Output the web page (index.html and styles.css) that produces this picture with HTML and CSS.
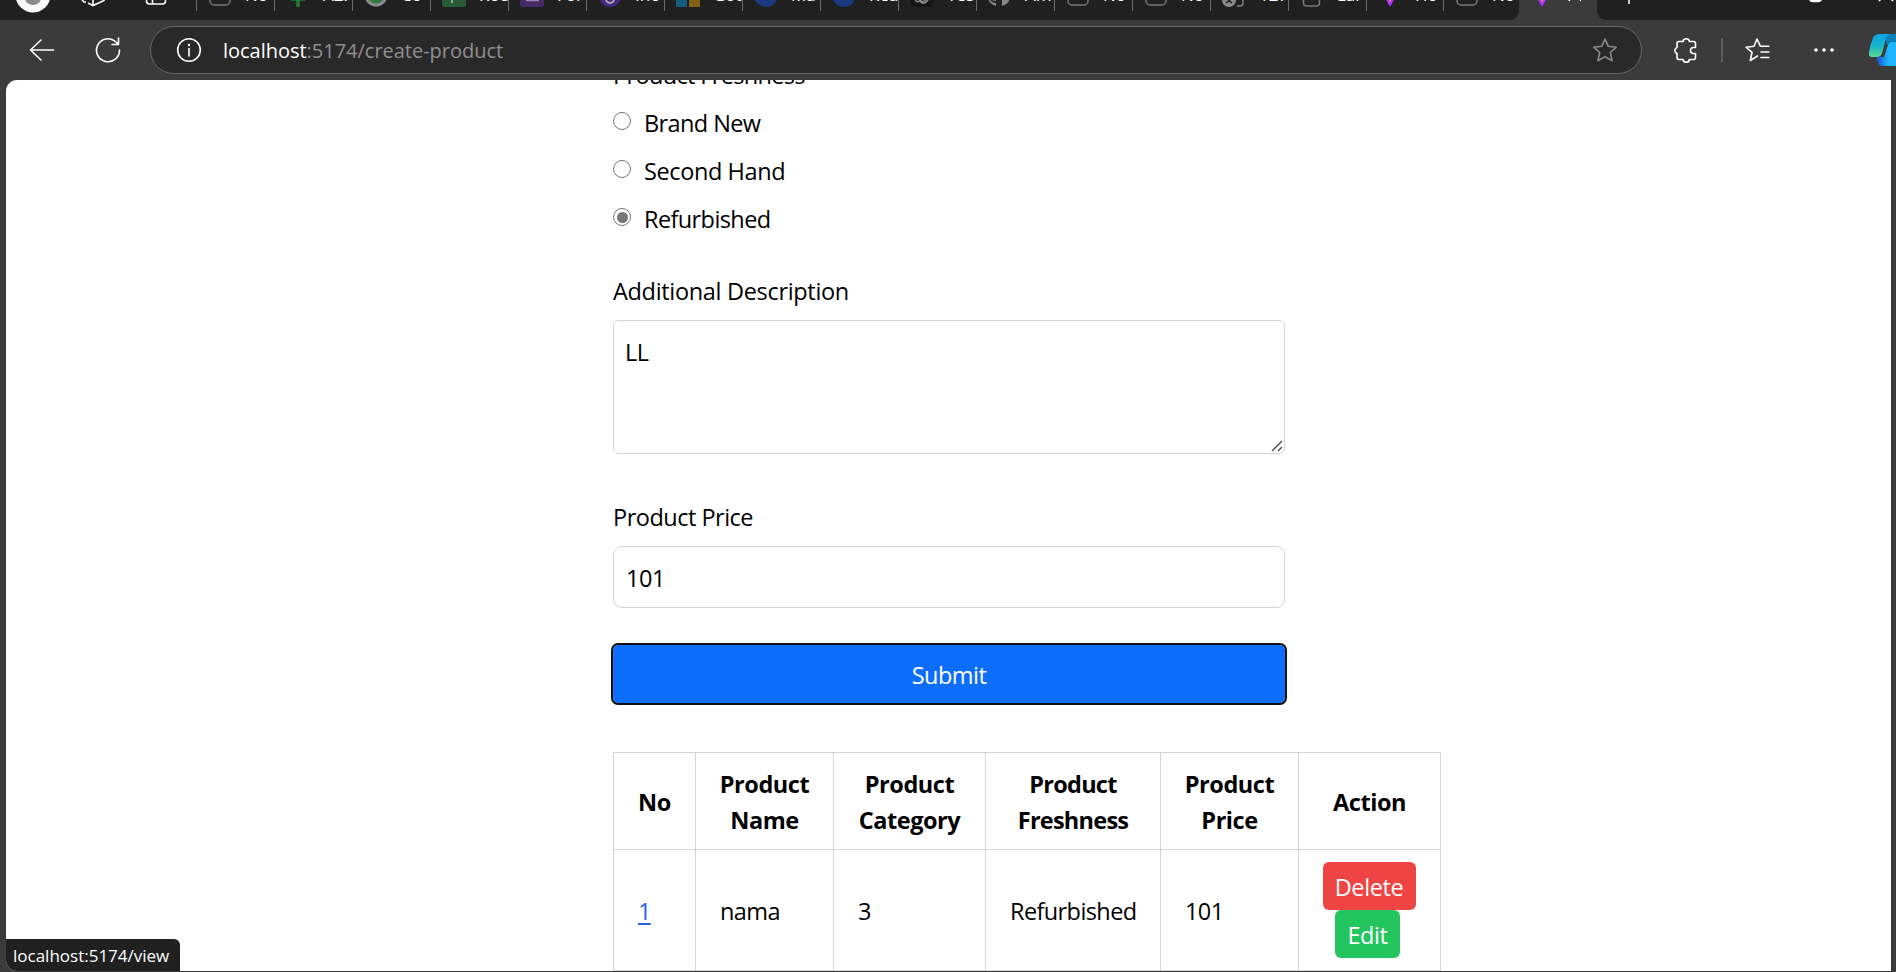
FILE: index.html
```html
<!DOCTYPE html>
<html lang="en">
<head>
<meta charset="utf-8">
<title>Create product</title>
<link rel="stylesheet" href="styles.css">
</head>
<body>
<div class="browser">
  <div class="tabstrip">
    <div class="pinned">
      <svg width="197" height="20" viewBox="0 0 197 20" fill="none">
        <circle cx="33" cy="-5" r="17.500" fill="#fafafa"/><ellipse cx="33" cy="-2" rx="8" ry="7" fill="#8a8a8a"/>
        <path d="M82 0l2 2 2 0M88 3l5 2.500 11-5V-3M93 5v-8" stroke="#fff" stroke-width="1.600"/>
        <path d="M146.500-4v5q0 3 3 3h13q3 0 3-3v-2.500h-13M152.500-2v6" stroke="#fff" stroke-width="1.600"/>
      </svg>
    </div>
    <div class="tab"><svg class="fav" viewBox="0 0 24 20"><rect class="doc" x="0" y="-12" width="20" height="17" rx="4"/></svg><span>No</span></div>
    <div class="tab"><svg class="fav" viewBox="0 0 24 20"><path d="M10-5v12M3-1h14" stroke="#247a34" stroke-width="3.500" fill="none"/></svg><span>AZ.</span></div>
    <div class="tab"><svg class="fav" viewBox="0 0 24 20"><circle cx="10" cy="-5" r="10" fill="#347a3c" stroke="#8a8a8a" stroke-width="3"/><path d="M14-3l3 1-4 4z" fill="#2b55b5"/></svg><span>Co</span></div>
    <div class="tab"><svg class="fav" viewBox="0 0 24 20"><rect x="-2" y="-16" width="24" height="23" rx="2" fill="#285c38"/><path d="M8-2v5" stroke="#8aa591" stroke-width="2"/></svg><span>Rou</span></div>
    <div class="tab"><svg class="fav" viewBox="0 0 24 20"><rect x="-2" y="-16" width="24" height="23" rx="2" fill="#452a65"/><path d="M4 .5h13" stroke="#9b84af" stroke-width="1.500"/></svg><span>For</span></div>
    <div class="tab"><svg class="fav" viewBox="0 0 24 20"><circle cx="10" cy="-4" r="11" fill="#482685"/><circle cx="10" cy="-1" r="4" fill="none" stroke="#aaa" stroke-width="2"/></svg><span>Ino</span></div>
    <div class="tab"><svg class="fav" viewBox="0 0 24 20"><path d="M-2-5h11V7H-2z" fill="#155d7e"/><path d="M11-5h11V7H11z" fill="#806115"/></svg><span>Got</span></div>
    <div class="tab"><svg class="fav" viewBox="0 0 24 20"><circle cx="10" cy="-5" r="12" fill="#193a7e"/></svg><span>Ma</span></div>
    <div class="tab"><svg class="fav" viewBox="0 0 24 20"><circle cx="10" cy="-5" r="12" fill="#193a7e"/></svg><span>Rea</span></div>
    <div class="tab"><svg class="fav" viewBox="0 0 24 20"><rect x="-2" y="-16" width="24" height="23" rx="6" fill="#151515"/><path d="M3-1q1 4 5 2 4 5 8-1M6-1l5 3 4-3" stroke="#888" stroke-width="1.500" fill="none"/></svg><span>Tes</span></div>
    <div class="tab"><svg class="fav" viewBox="0 0 24 20"><path d="M-2-2q1 6 8 8V3Q2 3 0 0l6 1V-2zM12-2v8q7-2 8-8z" fill="#858585"/></svg><span>Am</span></div>
    <div class="tab"><svg class="fav" viewBox="0 0 24 20"><rect class="doc" x="0" y="-12" width="20" height="17" rx="4"/></svg><span>No</span></div>
    <div class="tab"><svg class="fav" viewBox="0 0 24 20"><rect class="doc" x="0" y="-12" width="20" height="17" rx="4"/></svg><span>No</span></div>
    <div class="tab"><svg class="fav" viewBox="0 0 24 20"><circle cx="5" cy="0" r="7" fill="#8a8a8a"/><path d="M2-2l6 5M8-2L2 3" stroke="#202020" stroke-width="1.500"/><path d="M13 6h3q3 0 3-3v-6" fill="none" stroke="#858585" stroke-width="1.400"/></svg><span>127</span></div>
    <div class="tab"><svg class="fav" viewBox="0 0 24 20"><rect class="doc" x="1.500" y="-12" width="16" height="18" rx="3"/></svg><span>Lar</span></div>
    <div class="tab tab-vite"><svg class="fav" viewBox="0 0 24 20"><path d="M5-2h10L10 7z" fill="#a832ff"/><path d="M9-2h3l-2 5z" fill="#ffa024"/></svg><span>Ho</span></div>
    <div class="tab tab-last"><svg class="fav" viewBox="0 0 24 20"><rect class="doc" x="0" y="-12" width="20" height="17" rx="4"/></svg><span>No</span></div>
    <div class="tab tab-active"><svg class="fav" viewBox="0 0 24 20"><path d="M5-2h10L10 7z" fill="#a832ff"/><path d="M9-2h3l-2 5z" fill="#ffa024"/></svg><svg class="close" viewBox="0 0 14 20"><path d="M2 1l2-5M14 1l-2-5" fill="none" stroke="#fff" stroke-width="1.800"/></svg></div>
    <div class="window-controls">
      <svg width="300" height="20" viewBox="0 0 300 20" fill="none"><path d="M32-2v6" stroke="#fff" stroke-width="1.500"/><path d="M213-2q0 3 3 3h5q3 0 3-3" stroke="#fff" stroke-width="2.500"/><path d="M282 1l7-7 7 7" stroke="#fff" stroke-width="1.600"/></svg>
    </div>
  </div>

  <div class="toolbar">
    <svg class="back" width="26" height="26" viewBox="0 0 26 26"><path d="M12 3L1.500 13l10.500 10M1.500 13h23"/></svg>
    <svg class="reload" width="26" height="26" viewBox="0 0 26 26"><path d="M24.500 13A11.500 11.500 0 1 1 20.500 4.500L23.500 7.500M23.500 1v6.500H17"/></svg>
    <div class="address">
      <svg class="info" width="26" height="26" viewBox="0 0 26 26"><circle cx="13" cy="13" r="11.300"/><path d="M13 11.500v7.500"/><circle class="dot" cx="13" cy="8" r="1.200"/></svg>
      <div class="url"><b>localhost</b>:5174/create-product</div>
      <svg class="fav-star" width="26" height="26" viewBox="0 0 26 26"><path d="M13 2l3.300 7.300 8 .9-6 5.300 1.800 8.200-7.100-4.100-7.100 4.100 1.800-8.200-6-5.300 8-.9z"/></svg>
    </div>
    <svg class="puzzle" width="26" height="26" viewBox="0 0 26 26"><path d="M6 4.500h4a3.300 3.300 0 0 1 6.500 0h4q2 0 2 2v4h-2a3 3 0 0 0 0 6h2v4q0 2-2 2h-4a3.300 3.300 0 0 1-6.500 0H6q-2 0-2-2v-4a3.200 3.200 0 0 1 0-6v-4q0-2 2-2z"/></svg>
    <div class="divider"></div>
    <svg class="collections" width="26" height="26" viewBox="0 0 26 26"><path d="M13.500 19l-7.200 4.500L8 15.300 2 10.200l8-.9L13 2l3.300 7.200h8.500M17 15h7.800M17 20.500h7.800"/></svg>
    <svg class="more" width="22" height="26" viewBox="0 0 22 26"><circle cx="3" cy="13" r="1.800"/><circle cx="11" cy="13" r="1.800"/><circle cx="19" cy="13" r="1.800"/></svg>
    <svg class="copilot" width="28" height="34" viewBox="0 0 28 34">
      <defs>
        <linearGradient id="ca" x1="0" y1="0" x2="0" y2="1"><stop offset="0" stop-color="#08a5e6"/><stop offset=".55" stop-color="#17b6c8"/><stop offset="1" stop-color="#60d68a"/></linearGradient>
        <linearGradient id="cb" x1="0" y1="0" x2="1" y2="0"><stop offset="0" stop-color="#1b46da"/><stop offset=".6" stop-color="#1db5fb"/></linearGradient>
      </defs>
      <path d="M17 1h11v11h-9z" fill="#087eb5"/>
      <path d="M8 24h8l4-12q1-3 4-3h4v24H14q-3 0-4-4z" fill="url(#cb)"/>
      <path d="M11 1h12q-4 1-5 5l-4 14q-1 4-5 4H4q-4 0-3-5Q2 12 5 5q2-4 6-4z" fill="url(#ca)"/>
    </svg>
  </div>

  <div class="viewport">
    <main class="page">
      <form class="form">
        <div class="group-title"><span>Product Freshness</span></div>
        <div class="radio-row"><i class="radio"></i><span>Brand New</span></div>
        <div class="radio-row"><i class="radio"></i><span class="t-second">Second Hand</span></div>
        <div class="radio-row"><i class="radio checked"></i><span>Refurbished</span></div>
        <div class="label label-desc">Additional Description</div>
        <div class="textarea">LL
          <svg class="grip" width="12" height="12" viewBox="0 0 12 12"><path d="M1 11L11 1M7 11l4-4"/></svg>
        </div>
        <div class="label label-price">Product Price</div>
        <div class="input">101</div>
        <div class="submit">Submit</div>
      </form>
      <table class="products">
        <colgroup><col class="c-no"><col class="c-name"><col class="c-cat"><col class="c-fresh"><col class="c-price"><col class="c-act"></colgroup>
        <tr><th>No</th><th>Product<br>Name</th><th>Product<br>Category</th><th>Product<br>Freshness</th><th>Product<br>Price</th><th>Action</th></tr>
        <tr><td><a class="link">1</a></td><td>nama</td><td>3</td><td>Refurbished</td><td>101</td>
          <td class="actions"><div class="action-stack"><span class="btn btn-delete">Delete</span><span class="btn btn-edit">Edit</span></div></td></tr>
      </table>
    </main>
    <div class="status">localhost:5174/view</div>
  </div>
</div>
</body>
</html>
```
FILE: styles.css
```css
* { box-sizing: border-box; }
body { margin: 0; overflow: hidden; background: #3b3b3b; font-family: "Open Sans", "Noto Sans", sans-serif; }
svg { display: block; flex: none; }
.browser { width: 1896px; height: 972px; display: flex; flex-direction: column; overflow: hidden; }

.tabstrip { height: 20px; flex: none; display: flex; background: linear-gradient(90deg, #202020 1509px, #3b3b3b 1509px, #3b3b3b 1610px, #202020 1610px); overflow: hidden; }
.pinned { width: 198px; flex: none; border-right: 1px solid #6b6b6b; height: 11px; }
.tab { width: 78px; height: 11px; flex: none; display: flex; padding-left: 13px; border-right: 1px solid #6b6b6b; overflow: hidden; color: #fff; font-size: 17px; line-height: 20px; }
.tab:first-child + .tab, .pinned { margin-right: 0; }
.tab span { margin: -15px 0 0 11px; white-space: nowrap; height: 20px; }
.pinned { width: 197px; }
.fav { width: 24px; height: 20px; overflow: visible; }
.doc { fill: none; stroke: #777; stroke-width: 1.5; }
.tab-vite { width: 77px; }
.tab-last { width: 75px; height: 20px; border-right: 0; border-bottom-right-radius: 9px; background: #202020; }
.tab-active { height: 20px; border-right: 0; }
.close { width: 14px; height: 20px; margin-left: 11px; }
.window-controls { flex: 1; overflow: hidden; background: #202020; border-bottom-left-radius: 9px; }

.toolbar { height: 60px; flex: none; display: flex; align-items: center; padding-left: 29px; background: #3b3b3b; }
.toolbar svg { fill: none; stroke: #fff; stroke-width: 1.6; stroke-linejoin: round; stroke-linecap: round; }
.reload { margin-left: 40px; }
.address { flex: none; width: 1492px; height: 48px; margin-left: 29px; border: 1px solid #666; border-radius: 24px; background: #292929; display: flex; align-items: center; padding: 0 23px 0 25px; }
.url { flex: 1; margin-left: 21px; padding-top: 2px; font-size: 20px; line-height: 28px; letter-spacing: -0.02px; color: #8f8f8f; }
.url b { color: #fff; font-weight: 400; }
.toolbar .dot, .toolbar .more { fill: #fff; stroke: none; }
.toolbar .fav-star { stroke: #8b8b8b; }
.puzzle { margin-left: 31px; }
.divider { flex: none; width: 2px; height: 24px; margin-left: 22px; background: #5c5c5c; }
.collections { margin-left: 21px; }
.more { margin-left: 43px; }
.toolbar .copilot { margin-left: 33px; stroke: none; }

.viewport { position: relative; width: 1885px; height: 891px; margin-left: 6px; background: #fff; border-radius: 11px 0 0 11px; overflow: hidden; }
.page { padding-left: 607px; font-size: 23.5px; line-height: 36px; letter-spacing: -0.4px; color: #000; }
.form { width: 672px; }
.group-title { height: 24px; display: flex; align-items: flex-end; margin-top: -11px; letter-spacing: -0.65px; }
.radio-row { height: 36px; margin-top: 12px; display: flex; letter-spacing: -0.6px; }
.group-title + .radio-row { margin-top: 11px; }
.radio-row span { padding-top: 1px; }
.radio-row .t-second { letter-spacing: -0.4px; }
.radio { flex: none; width: 18px; height: 18px; margin: 8px 13px 0 0; border: 1.5px solid #767676; border-radius: 50%; }
.checked { background: #767676; background-clip: content-box; padding: 2.5px; }
.label { height: 36px; padding-top: 1px; }
.label-desc { margin-top: 36px; letter-spacing: -0.32px; }
.textarea { position: relative; height: 134px; margin-top: 12px; padding: 13px 11px; border: 1px solid #d1d5db; border-radius: 6px; }
.grip { position: absolute; right: 1px; bottom: 1px; fill: none; stroke: #444; stroke-width: 1.3; }
.label-price { margin-top: 44px; letter-spacing: -0.5px; }
.input { height: 62px; margin-top: 12px; padding: 13px 12px; border: 1px solid #d1d5db; border-radius: 9px; }
.submit { height: 58px; margin: 37px 0 49px; border-radius: 5px; background: #0d6efd; outline: 2.5px solid #101010; outline-offset: -0.5px; color: #fff; text-align: center; line-height: 60px; letter-spacing: -0.5px; }
.products { width: 827px; table-layout: fixed; border-collapse: collapse; }
.c-no { width: 82px; } .c-name { width: 138px; } .c-cat { width: 152px; } .c-fresh { width: 175px; } .c-price { width: 138px; } .c-act { width: 142px; }
.products th, .products td { border: 1px solid #d1d5db; text-align: left; white-space: nowrap; }
.products th { height: 97px; padding: 2px 0 0; text-align: center; font-weight: 700; letter-spacing: -0.45px; }
.products th:nth-child(4) { letter-spacing: -0.75px; }
.products td { height: 121px; padding: 2px 0 0 24px; letter-spacing: -0.6px; }
.products td.actions { padding: 0; letter-spacing: -0.4px; }
.action-stack { display: flex; flex-direction: column; align-items: center; }
.link { color: #2563eb; text-decoration: underline; text-underline-offset: 3px; }
.btn { height: 48px; border-radius: 6px; color: #fff; text-align: center; line-height: 50px; }
.btn-delete { width: 93px; background: #ef4444; margin-right: 1px; }
.btn-edit { width: 65px; background: #22c55e; margin-right: 4px; }
.status { position: absolute; left: 0; bottom: 0; width: 174px; height: 32px; padding-left: 7px; background: #202020; color: #fff; font-size: 17px; line-height: 33px; letter-spacing: 0; border-top-right-radius: 6px; white-space: nowrap; }
```
